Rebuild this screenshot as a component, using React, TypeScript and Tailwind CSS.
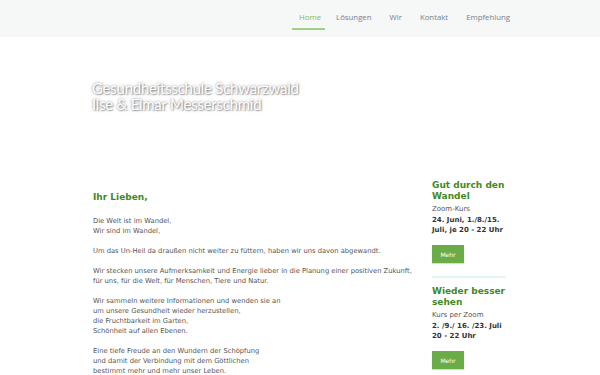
const navItems = ["Home", "Lösungen", "Wir", "Kontakt", "Empfehlung"];

const bodyFont = "font-['DejaVu_Sans',Verdana,sans-serif]";

function Paragraph({lines}: {lines: string[]}) {
    return (
        <p className="mb-[10px]">
            {lines.map((l) => (
                <span key={l} className="block">{l}</span>
            ))}
        </p>
    );
}

function Course({title, sub, when}: {title: string[]; sub: string; when: string[]}) {
    return (
        <div className="flex flex-col">
            <h3 className="text-[9px] leading-[11px] font-bold text-[#3f8a1f]">
                {title.map((t) => <span key={t} className="block">{t}</span>)}
            </h3>
            <p className="mt-[2px] text-[7px] leading-[10px] text-[#555]">{sub}</p>
            <p className="mt-[1px] text-[7px] leading-[10px] font-bold text-[#333]">
                {when.map((w) => <span key={w} className="block">{w}</span>)}
            </p>
            <button className="mt-[10px] w-[32px] h-[18px] bg-[#6aac48] text-white text-[6px] shadow-[0_1px_1px_rgba(0,0,0,0.15)]">
                Mehr
            </button>
        </div>
    );
}

export default function App() {
    return (
        <div className={`w-[600px] h-[375px] bg-white overflow-hidden ${bodyFont}`}>
            <header className="h-[37px] bg-[#f6f7f7] flex justify-end pr-[90px]">
                <nav className="flex items-start gap-[18px] pt-[12px] font-['Open_Sans',sans-serif] text-[7.8px]">
                    {navItems.map((n, i) => (
                        <a key={n}
                           className={i === 0
                               ? "text-[#7dbb5c] border-b-2 border-[#9fd184] pl-[7px] pr-[4px] pb-[4px] mr-[-7px]"
                               : "text-[#76818c] pb-[4px]"}>
                            {n}
                        </a>
                    ))}
                </nav>
            </header>

            <section className="h-[133px] pl-[92px] pt-[43px]">
                <h1 className="font-['Lato',sans-serif] text-[15px] leading-[16px] text-white tracking-[-0.25px] [text-shadow:0_0_3px_rgba(0,0,0,0.5),1px_1px_1px_rgba(0,0,0,0.25)]">
                    <span className="block">Gesundheitsschule Schwarzwald</span>
                    <span className="block">Ilse &amp; Elmar Messerschmid</span>
                </h1>
            </section>

            <div className="flex pl-[93px]">
                <main className="w-[339px] pt-[21px]">
                    <h2 className="text-[9px] leading-[12px] font-bold text-[#3f8a1f] mb-[13px]">Ihr Lieben,</h2>
                    <div className="text-[6.75px] leading-[10px] text-[#555]">
                        <Paragraph lines={["Die Welt ist im Wandel,", "Wir sind im Wandel,"]}/>
                        <Paragraph lines={["Um das Un-Heil da draußen nicht weiter zu füttern, haben wir uns davon abgewandt."]}/>
                        <Paragraph lines={[
                            "Wir stecken unsere Aufmerksamkeit und Energie lieber in die Planung einer positiven Zukunft,",
                            "für uns, für die Welt, für Menschen, Tiere und Natur."
                        ]}/>
                        <Paragraph lines={[
                            "Wir sammeln weitere Informationen und wenden sie an",
                            "um unsere Gesundheit wieder herzustellen,",
                            "die Fruchtbarkeit im Garten,",
                            "Schönheit auf allen Ebenen."
                        ]}/>
                        <Paragraph lines={[
                            "Eine tiefe Freude an den Wundern der Schöpfung",
                            "und damit der Verbindung mit dem Göttlichen",
                            "bestimmt mehr und mehr unser Leben."
                        ]}/>
                    </div>
                </main>
                <aside className="w-[74px] pt-[10px] flex flex-col">
                    <Course title={["Gut durch den", "Wandel"]} sub="Zoom-Kurs"
                            when={["24. Juni, 1./8./15.", "Juli, je 20 - 22 Uhr"]}/>
                    <div className="h-[2px] bg-[#e2f6ef] mt-[13px] mb-[8px]"/>
                    <Course title={["Wieder besser", "sehen"]} sub="Kurs per Zoom"
                            when={["2. /9./ 16. /23. Juli", "20 - 22 Uhr"]}/>
                </aside>
            </div>
        </div>
    );
}
